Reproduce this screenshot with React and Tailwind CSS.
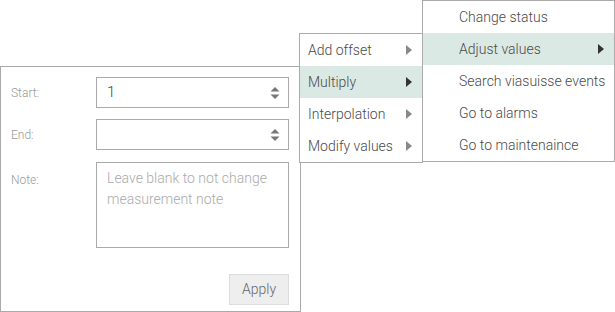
import React from "react";

function Arrow({ dark }) {
  return (
    <svg width="6" height="10" viewBox="0 0 6 10" className={dark ? "fill-[#333]" : "fill-[#888]"}>
      <path d="M0 0 L6 5 L0 10 Z" />
    </svg>
  );
}

function Spinner() {
  return (
    <svg width="10" height="18" viewBox="0 0 10 18" className="fill-[#777]">
      <path d="M5 3 L9.5 7.5 L0.5 7.5 Z" />
      <path d="M0.5 10.5 L9.5 10.5 L5 15 Z" />
    </svg>
  );
}

function MenuItem({ label, active, arrow, indent }) {
  return (
    <div
      className={
        "h-8 flex items-center justify-between pr-[10px] text-[14px] font-light text-[#4a4a4a] whitespace-nowrap " +
        (indent ? "pl-[36px] " : "pl-[8px] ") +
        (active ? "bg-[#dbe9e4]" : "")
      }
    >
      <span>{label}</span>
      {arrow && <Arrow dark={active} />}
    </div>
  );
}

export default function App() {
  return (
    <div className="relative w-[615px] h-[312px] bg-white overflow-hidden" style={{ fontFamily: "Roboto, 'Liberation Sans', sans-serif" }}>
      <div className="mt-[66px] w-[301px] h-[246px] border border-[#aaa] pt-[10px] pl-[10px] pr-[11px] flex flex-col">
        <div className="flex items-center h-[31px]">
          <span className="w-[85px] text-[12px] font-light text-[#999]">Start:</span>
          <div className="flex-1 h-[31px] border border-[#aaa] flex items-center justify-between pl-[10px] pr-[8px]">
            <span className="text-[15px] font-light text-[#444]">1</span>
            <Spinner />
          </div>
        </div>
        <div className="flex items-center h-[31px] mt-[11px]">
          <span className="w-[85px] text-[12px] font-light text-[#999]">End:</span>
          <div className="flex-1 h-[31px] border border-[#aaa] flex items-center justify-end pl-[10px] pr-[8px]">
            <Spinner />
          </div>
        </div>
        <div className="flex items-start mt-[12px]">
          <span className="w-[85px] text-[12px] font-light text-[#999] pt-[9px]">Note:</span>
          <div className="flex-1 h-[86px] border border-[#aaa] pl-[10px] pt-[5px] text-[14px] font-light text-[#aaa] leading-[21px]">
            Leave blank to not change measurement note
          </div>
        </div>
        <div className="flex justify-end mt-[26px]">
          <div className="w-[60px] h-[31px] bg-[#eeeeee] border border-[#ddd] flex items-center justify-center text-[14px] font-light text-[#666]">
            Apply
          </div>
        </div>
      </div>

      <div className="absolute left-[299px] top-[33px] w-[124px] border border-[#aaa] bg-white">
        <MenuItem label="Add offset" arrow />
        <MenuItem label="Multiply" arrow active />
        <MenuItem label="Interpolation" arrow />
        <MenuItem label="Modify values" arrow />
      </div>

      <div className="absolute left-[422px] top-0 w-[193px] border border-[#aaa] bg-white">
        <MenuItem label="Change status" indent />
        <MenuItem label="Adjust values" indent arrow active />
        <MenuItem label="Search viasuisse events" indent />
        <MenuItem label="Go to alarms" indent />
        <MenuItem label="Go to maintenaince" indent />
      </div>
    </div>
  );
}
